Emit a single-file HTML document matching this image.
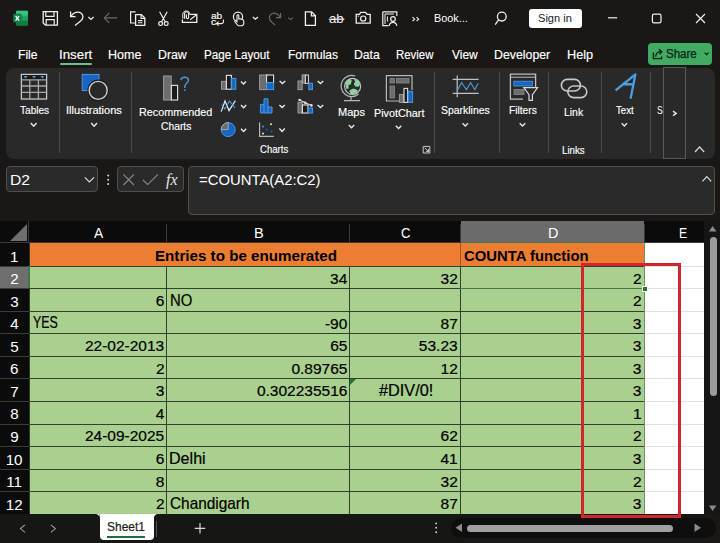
<!DOCTYPE html><html><head><meta charset="utf-8"><style>
html,body{margin:0;padding:0;width:720px;height:543px;overflow:hidden;background:#1a1715}
.t{position:absolute;white-space:pre;line-height:1;font-family:"Liberation Sans",sans-serif;transform-origin:0 0}
svg{overflow:visible}
</style></head><body>
<div style="position:absolute;left:0px;top:0px;width:720px;height:543px;background:#1a1715;"></div>
<div style="position:absolute;left:6px;top:67.5px;width:709px;height:91px;background:#292929;border-radius:8px;"></div>
<div style="position:absolute;left:6px;top:166px;width:92px;height:26px;background:#2a2a2a;border:1px solid #4f4f4f;border-radius:4px;box-sizing:border-box;"></div>
<div style="position:absolute;left:117px;top:166px;width:67px;height:26px;background:#2a2a2a;border:1px solid #4f4f4f;border-radius:4px;box-sizing:border-box;"></div>
<div style="position:absolute;left:188px;top:166px;width:527px;height:49px;background:#2a2a2a;border:1px solid #4f4f4f;border-radius:4px;box-sizing:border-box;"></div>
<div style="position:absolute;left:0px;top:221px;width:704px;height:22px;background:#0b0b0b;"></div>
<div style="position:absolute;left:704px;top:221px;width:16px;height:293px;background:#161616;"></div>
<svg style="position:absolute;left:0px;top:221px;" width="29" height="22" viewBox="0 0 29 22"><path d="M27 3 L27 20 L10 20 Z" fill="#6e6e6e"/></svg>
<div style="position:absolute;left:28px;top:221px;width:1px;height:22px;background:#3a3a3a;"></div>
<div style="position:absolute;left:166px;top:224px;width:1px;height:19px;background:#3a3a3a;"></div>
<div style="position:absolute;left:349px;top:224px;width:1px;height:19px;background:#3a3a3a;"></div>
<div style="position:absolute;left:460px;top:224px;width:1px;height:19px;background:#3a3a3a;"></div>
<div style="position:absolute;left:644px;top:224px;width:1px;height:19px;background:#3a3a3a;"></div>
<div style="position:absolute;left:461px;top:221px;width:183px;height:22px;background:#6b6b6b;"></div>
<div style="position:absolute;left:0px;top:242px;width:704px;height:1px;background:#3a3a3a;"></div>
<div style="position:absolute;left:0px;top:243px;width:29px;height:271px;background:#0b0b0b;"></div>
<div style="position:absolute;left:0px;top:266px;width:29px;height:22px;background:#6e6e6e;"></div>
<div style="position:absolute;left:0px;top:266px;width:29px;height:1px;background:#3a3a3a;"></div>
<div style="position:absolute;left:0px;top:288px;width:29px;height:1px;background:#3a3a3a;"></div>
<div style="position:absolute;left:0px;top:311px;width:29px;height:1px;background:#3a3a3a;"></div>
<div style="position:absolute;left:0px;top:333px;width:29px;height:1px;background:#3a3a3a;"></div>
<div style="position:absolute;left:0px;top:356px;width:29px;height:1px;background:#3a3a3a;"></div>
<div style="position:absolute;left:0px;top:378px;width:29px;height:1px;background:#3a3a3a;"></div>
<div style="position:absolute;left:0px;top:401px;width:29px;height:1px;background:#3a3a3a;"></div>
<div style="position:absolute;left:0px;top:424px;width:29px;height:1px;background:#3a3a3a;"></div>
<div style="position:absolute;left:0px;top:446px;width:29px;height:1px;background:#3a3a3a;"></div>
<div style="position:absolute;left:0px;top:469px;width:29px;height:1px;background:#3a3a3a;"></div>
<div style="position:absolute;left:0px;top:491px;width:29px;height:1px;background:#3a3a3a;"></div>
<div style="position:absolute;left:29px;top:243px;width:432px;height:23px;background:#ed7d31;"></div>
<div style="position:absolute;left:461px;top:243px;width:183px;height:23px;background:#ed7d31;"></div>
<div style="position:absolute;left:29px;top:266px;width:615px;height:248px;background:#a9d08e;"></div>
<div style="position:absolute;left:644px;top:243px;width:60px;height:271px;background:#ffffff;"></div>
<div style="position:absolute;left:644px;top:266px;width:60px;height:1px;background:#e1e1e1;"></div>
<div style="position:absolute;left:644px;top:288px;width:60px;height:1px;background:#e1e1e1;"></div>
<div style="position:absolute;left:644px;top:311px;width:60px;height:1px;background:#e1e1e1;"></div>
<div style="position:absolute;left:644px;top:333px;width:60px;height:1px;background:#e1e1e1;"></div>
<div style="position:absolute;left:644px;top:356px;width:60px;height:1px;background:#e1e1e1;"></div>
<div style="position:absolute;left:644px;top:378px;width:60px;height:1px;background:#e1e1e1;"></div>
<div style="position:absolute;left:644px;top:401px;width:60px;height:1px;background:#e1e1e1;"></div>
<div style="position:absolute;left:644px;top:424px;width:60px;height:1px;background:#e1e1e1;"></div>
<div style="position:absolute;left:644px;top:446px;width:60px;height:1px;background:#e1e1e1;"></div>
<div style="position:absolute;left:644px;top:469px;width:60px;height:1px;background:#e1e1e1;"></div>
<div style="position:absolute;left:644px;top:491px;width:60px;height:1px;background:#e1e1e1;"></div>
<div style="position:absolute;left:29px;top:266px;width:615px;height:1px;background:#34402e;"></div>
<div style="position:absolute;left:29px;top:288px;width:615px;height:1px;background:#34402e;"></div>
<div style="position:absolute;left:29px;top:311px;width:615px;height:1px;background:#34402e;"></div>
<div style="position:absolute;left:29px;top:333px;width:615px;height:1px;background:#34402e;"></div>
<div style="position:absolute;left:29px;top:356px;width:615px;height:1px;background:#34402e;"></div>
<div style="position:absolute;left:29px;top:378px;width:615px;height:1px;background:#34402e;"></div>
<div style="position:absolute;left:29px;top:401px;width:615px;height:1px;background:#34402e;"></div>
<div style="position:absolute;left:29px;top:424px;width:615px;height:1px;background:#34402e;"></div>
<div style="position:absolute;left:29px;top:446px;width:615px;height:1px;background:#34402e;"></div>
<div style="position:absolute;left:29px;top:469px;width:615px;height:1px;background:#34402e;"></div>
<div style="position:absolute;left:29px;top:491px;width:615px;height:1px;background:#34402e;"></div>
<div style="position:absolute;left:166px;top:266px;width:1px;height:248px;background:#34402e;"></div>
<div style="position:absolute;left:349px;top:266px;width:1px;height:248px;background:#34402e;"></div>
<div style="position:absolute;left:460px;top:266px;width:1px;height:248px;background:#34402e;"></div>
<div style="position:absolute;left:460px;top:243px;width:1px;height:23px;background:#9a5a2a;"></div>
<div style="position:absolute;left:29px;top:243px;width:1px;height:271px;background:#2a3a25;"></div>
<div style="position:absolute;left:644px;top:243px;width:1px;height:271px;background:#7a8a70;"></div>
<div style="position:absolute;left:460px;top:288px;width:185px;height:1px;background:#3f7a4a;"></div>
<div style="position:absolute;left:642px;top:286px;width:4px;height:4px;background:#2f6b3f;border:1px solid #fff;box-sizing:content-box;"></div>
<div style="position:absolute;left:461px;top:241.5px;width:183px;height:1.5px;background:#3e7a4c;"></div>
<div style="position:absolute;left:28px;top:266px;width:1.5px;height:22px;background:#3e7a4c;"></div>
<svg style="position:absolute;left:350px;top:379px;" width="7" height="7" viewBox="0 0 7 7"><path d="M0 0 L6 0 L0 6 Z" fill="#1f7a2f"/></svg>
<div class="t" style="left:154.61px;top:248.62px;font-size:14.80px;color:#000000;font-weight:bold;transform:scaleX(1.0246);">Entries to be enumerated</div>
<div class="t" style="left:464.11px;top:248.62px;font-size:14.80px;color:#000000;font-weight:bold;transform:scaleX(1.0039);">COUNTA function</div>
<div class="t" style="left:330.06px;top:270.57px;font-size:15.50px;color:#000000;font-weight:normal;transform:scaleX(1.0000);-webkit-text-stroke:0.2px #000;">34</div>
<div class="t" style="left:440.57px;top:270.57px;font-size:15.50px;color:#000000;font-weight:normal;transform:scaleX(1.0000);-webkit-text-stroke:0.2px #000;">32</div>
<div class="t" style="left:632.97px;top:270.57px;font-size:15.50px;color:#000000;font-weight:normal;transform:scaleX(1.0000);-webkit-text-stroke:0.2px #000;">2</div>
<div class="t" style="left:155.82px;top:293.12px;font-size:15.50px;color:#000000;font-weight:normal;transform:scaleX(1.0000);-webkit-text-stroke:0.2px #000;">6</div>
<div class="t" style="left:632.97px;top:293.12px;font-size:15.50px;color:#000000;font-weight:normal;transform:scaleX(1.0000);-webkit-text-stroke:0.2px #000;">2</div>
<div class="t" style="left:324.94px;top:315.68px;font-size:15.50px;color:#000000;font-weight:normal;transform:scaleX(1.0000);-webkit-text-stroke:0.2px #000;">-90</div>
<div class="t" style="left:440.57px;top:315.68px;font-size:15.50px;color:#000000;font-weight:normal;transform:scaleX(1.0000);-webkit-text-stroke:0.2px #000;">87</div>
<div class="t" style="left:632.82px;top:315.68px;font-size:15.50px;color:#000000;font-weight:normal;transform:scaleX(1.0000);-webkit-text-stroke:0.2px #000;">3</div>
<div class="t" style="left:330.22px;top:338.22px;font-size:15.50px;color:#000000;font-weight:normal;transform:scaleX(1.0000);-webkit-text-stroke:0.2px #000;">65</div>
<div class="t" style="left:418.87px;top:338.22px;font-size:15.50px;color:#000000;font-weight:normal;transform:scaleX(1.0000);-webkit-text-stroke:0.2px #000;">53.23</div>
<div class="t" style="left:632.82px;top:338.22px;font-size:15.50px;color:#000000;font-weight:normal;transform:scaleX(1.0000);-webkit-text-stroke:0.2px #000;">3</div>
<div class="t" style="left:155.97px;top:360.77px;font-size:15.50px;color:#000000;font-weight:normal;transform:scaleX(1.0000);-webkit-text-stroke:0.2px #000;">2</div>
<div class="t" style="left:291.39px;top:360.77px;font-size:15.50px;color:#000000;font-weight:normal;transform:scaleX(1.0000);-webkit-text-stroke:0.2px #000;">0.89765</div>
<div class="t" style="left:440.57px;top:360.77px;font-size:15.50px;color:#000000;font-weight:normal;transform:scaleX(1.0000);-webkit-text-stroke:0.2px #000;">12</div>
<div class="t" style="left:632.82px;top:360.77px;font-size:15.50px;color:#000000;font-weight:normal;transform:scaleX(1.0000);-webkit-text-stroke:0.2px #000;">3</div>
<div class="t" style="left:155.82px;top:383.32px;font-size:15.50px;color:#000000;font-weight:normal;transform:scaleX(1.0000);-webkit-text-stroke:0.2px #000;">3</div>
<div class="t" style="left:256.90px;top:383.32px;font-size:15.50px;color:#000000;font-weight:normal;transform:scaleX(1.0000);-webkit-text-stroke:0.2px #000;">0.302235516</div>
<div class="t" style="left:632.82px;top:383.32px;font-size:15.50px;color:#000000;font-weight:normal;transform:scaleX(1.0000);-webkit-text-stroke:0.2px #000;">3</div>
<div class="t" style="left:155.66px;top:405.87px;font-size:15.50px;color:#000000;font-weight:normal;transform:scaleX(1.0000);-webkit-text-stroke:0.2px #000;">4</div>
<div class="t" style="left:632.89px;top:405.87px;font-size:15.50px;color:#000000;font-weight:normal;transform:scaleX(1.0000);-webkit-text-stroke:0.2px #000;">1</div>
<div class="t" style="left:440.57px;top:428.43px;font-size:15.50px;color:#000000;font-weight:normal;transform:scaleX(1.0000);-webkit-text-stroke:0.2px #000;">62</div>
<div class="t" style="left:632.97px;top:428.43px;font-size:15.50px;color:#000000;font-weight:normal;transform:scaleX(1.0000);-webkit-text-stroke:0.2px #000;">2</div>
<div class="t" style="left:155.82px;top:450.97px;font-size:15.50px;color:#000000;font-weight:normal;transform:scaleX(1.0000);-webkit-text-stroke:0.2px #000;">6</div>
<div class="t" style="left:440.49px;top:450.97px;font-size:15.50px;color:#000000;font-weight:normal;transform:scaleX(1.0000);-webkit-text-stroke:0.2px #000;">41</div>
<div class="t" style="left:632.82px;top:450.97px;font-size:15.50px;color:#000000;font-weight:normal;transform:scaleX(1.0000);-webkit-text-stroke:0.2px #000;">3</div>
<div class="t" style="left:155.82px;top:473.52px;font-size:15.50px;color:#000000;font-weight:normal;transform:scaleX(1.0000);-webkit-text-stroke:0.2px #000;">8</div>
<div class="t" style="left:440.57px;top:473.52px;font-size:15.50px;color:#000000;font-weight:normal;transform:scaleX(1.0000);-webkit-text-stroke:0.2px #000;">32</div>
<div class="t" style="left:632.97px;top:473.52px;font-size:15.50px;color:#000000;font-weight:normal;transform:scaleX(1.0000);-webkit-text-stroke:0.2px #000;">2</div>
<div class="t" style="left:155.97px;top:496.07px;font-size:15.50px;color:#000000;font-weight:normal;transform:scaleX(1.0000);-webkit-text-stroke:0.2px #000;">2</div>
<div class="t" style="left:440.57px;top:496.07px;font-size:15.50px;color:#000000;font-weight:normal;transform:scaleX(1.0000);-webkit-text-stroke:0.2px #000;">87</div>
<div class="t" style="left:632.82px;top:496.07px;font-size:15.50px;color:#000000;font-weight:normal;transform:scaleX(1.0000);-webkit-text-stroke:0.2px #000;">3</div>
<div class="t" style="left:84.83px;top:338.22px;font-size:15.50px;color:#000000;font-weight:normal;transform:scaleX(0.9976);-webkit-text-stroke:0.2px #000;">22-02-2013</div>
<div class="t" style="left:84.83px;top:428.43px;font-size:15.50px;color:#000000;font-weight:normal;transform:scaleX(0.9976);-webkit-text-stroke:0.2px #000;">24-09-2025</div>
<div class="t" style="left:169.61px;top:292.79px;font-size:15.90px;color:#000000;font-weight:normal;transform:scaleX(0.9365);-webkit-text-stroke:0.2px #000;">NO</div>
<div class="t" style="left:32.59px;top:315.34px;font-size:15.90px;color:#000000;font-weight:normal;transform:scaleX(0.7788);-webkit-text-stroke:0.2px #000;">YES</div>
<div class="t" style="left:378.92px;top:382.99px;font-size:15.90px;color:#000000;font-weight:normal;transform:scaleX(1.0246);-webkit-text-stroke:0.2px #000;">#DIV/0!</div>
<div class="t" style="left:169.11px;top:450.63px;font-size:15.90px;color:#000000;font-weight:normal;transform:scaleX(1.0128);-webkit-text-stroke:0.2px #000;">Delhi</div>
<div class="t" style="left:169.63px;top:495.74px;font-size:15.90px;color:#000000;font-weight:normal;transform:scaleX(0.9680);-webkit-text-stroke:0.2px #000;">Chandigarh</div>
<div class="t" style="left:9.95px;top:248.58px;font-size:15.20px;color:#ffffff;font-weight:normal;transform:scaleX(1.0000);">1</div>
<div class="t" style="left:10.18px;top:271.13px;font-size:15.20px;color:#ffffff;font-weight:normal;transform:scaleX(1.0000);">2</div>
<div class="t" style="left:10.18px;top:293.68px;font-size:15.20px;color:#ffffff;font-weight:normal;transform:scaleX(1.0000);">3</div>
<div class="t" style="left:10.26px;top:316.23px;font-size:15.20px;color:#ffffff;font-weight:normal;transform:scaleX(1.0000);">4</div>
<div class="t" style="left:10.18px;top:338.78px;font-size:15.20px;color:#ffffff;font-weight:normal;transform:scaleX(1.0000);">5</div>
<div class="t" style="left:10.11px;top:361.33px;font-size:15.20px;color:#ffffff;font-weight:normal;transform:scaleX(1.0000);">6</div>
<div class="t" style="left:10.18px;top:383.88px;font-size:15.20px;color:#ffffff;font-weight:normal;transform:scaleX(1.0000);">7</div>
<div class="t" style="left:10.14px;top:406.43px;font-size:15.20px;color:#ffffff;font-weight:normal;transform:scaleX(1.0000);">8</div>
<div class="t" style="left:10.18px;top:428.98px;font-size:15.20px;color:#ffffff;font-weight:normal;transform:scaleX(1.0000);">9</div>
<div class="t" style="left:5.66px;top:451.53px;font-size:15.20px;color:#ffffff;font-weight:normal;transform:scaleX(1.0000);">10</div>
<div class="t" style="left:6.31px;top:474.08px;font-size:15.20px;color:#ffffff;font-weight:normal;transform:scaleX(1.0000);">11</div>
<div class="t" style="left:5.77px;top:496.63px;font-size:15.20px;color:#ffffff;font-weight:normal;transform:scaleX(1.0000);">12</div>
<div class="t" style="left:93.90px;top:224.91px;font-size:15.40px;color:#ffffff;font-weight:normal;transform:scaleX(0.8935);">A</div>
<div class="t" style="left:253.83px;top:224.91px;font-size:15.40px;color:#ffffff;font-weight:normal;transform:scaleX(0.9467);">B</div>
<div class="t" style="left:401.05px;top:224.91px;font-size:15.40px;color:#ffffff;font-weight:normal;transform:scaleX(0.8488);">C</div>
<div class="t" style="left:547.54px;top:224.91px;font-size:15.40px;color:#ffffff;font-weight:normal;transform:scaleX(0.9386);">D</div>
<div class="t" style="left:679.43px;top:224.91px;font-size:15.40px;color:#ffffff;font-weight:normal;transform:scaleX(0.7864);">E</div>
<div class="t" style="left:198.66px;top:173.08px;font-size:14.50px;color:#ffffff;font-weight:normal;transform:scaleX(1.0244);">=COUNTA(A2:C2)</div>
<div class="t" style="left:9.74px;top:172.72px;font-size:14.80px;color:#ffffff;font-weight:normal;transform:scaleX(1.0622);">D2</div>
<div class="t" style="left:17.53px;top:48.80px;font-size:12.00px;color:#ffffff;font-weight:normal;transform:scaleX(1.0101);-webkit-text-stroke:0.15px #fff;">File</div>
<div class="t" style="left:58.80px;top:48.80px;font-size:12.00px;color:#ffffff;font-weight:normal;transform:scaleX(1.1088);-webkit-text-stroke:0.15px #fff;">Insert</div>
<div class="t" style="left:108.40px;top:48.80px;font-size:12.00px;color:#ffffff;font-weight:normal;transform:scaleX(1.0433);-webkit-text-stroke:0.15px #fff;">Home</div>
<div class="t" style="left:158.21px;top:48.80px;font-size:12.00px;color:#ffffff;font-weight:normal;transform:scaleX(1.0273);-webkit-text-stroke:0.15px #fff;">Draw</div>
<div class="t" style="left:204.07px;top:48.80px;font-size:12.00px;color:#ffffff;font-weight:normal;transform:scaleX(0.9720);-webkit-text-stroke:0.15px #fff;">Page Layout</div>
<div class="t" style="left:287.64px;top:48.80px;font-size:12.00px;color:#ffffff;font-weight:normal;transform:scaleX(1.0008);-webkit-text-stroke:0.15px #fff;">Formulas</div>
<div class="t" style="left:354.02px;top:48.80px;font-size:12.00px;color:#ffffff;font-weight:normal;transform:scaleX(1.0181);-webkit-text-stroke:0.15px #fff;">Data</div>
<div class="t" style="left:396.39px;top:48.80px;font-size:12.00px;color:#ffffff;font-weight:normal;transform:scaleX(0.9505);-webkit-text-stroke:0.15px #fff;">Review</div>
<div class="t" style="left:451.64px;top:48.80px;font-size:12.00px;color:#ffffff;font-weight:normal;transform:scaleX(0.9984);-webkit-text-stroke:0.15px #fff;">View</div>
<div class="t" style="left:494.41px;top:48.80px;font-size:12.00px;color:#ffffff;font-weight:normal;transform:scaleX(1.0277);-webkit-text-stroke:0.15px #fff;">Developer</div>
<div class="t" style="left:567.38px;top:48.80px;font-size:12.00px;color:#ffffff;font-weight:normal;transform:scaleX(1.0594);-webkit-text-stroke:0.15px #fff;">Help</div>
<div style="position:absolute;left:60px;top:63px;width:32px;height:2px;background:#6fc08f;border-radius:1px;"></div>
<div style="position:absolute;left:648px;top:43px;width:63.5px;height:22px;background:#41ab64;border-radius:4px;"></div>
<div class="t" style="left:666.48px;top:48.30px;font-size:12.00px;color:#0a1f10;font-weight:normal;transform:scaleX(0.9612);-webkit-text-stroke:0.25px #0a1f10;">Share</div>
<svg style="position:absolute;left:0;top:0" width="720" height="543"><path d="M653.4 52.4 V58.6 H661.6 V56.4" fill="none" stroke="#0a1f10" stroke-width="1.3"/><path d="M655.6 56.6 C656 53.2 658 51.6 661 51.6" fill="none" stroke="#0a1f10" stroke-width="1.3"/><path d="M658.8 49.2 L661.8 51.6 L659.4 54.4" fill="none" stroke="#0a1f10" stroke-width="1.3"/><path d="M704.6 52.6 L706.6 54.6 L708.6 52.6" fill="none" stroke="#0a1f10" stroke-width="1.2"/></svg>
<div class="t" style="left:19.50px;top:104.98px;font-size:11.20px;color:#ffffff;font-weight:normal;transform:scaleX(0.9007);-webkit-text-stroke:0.15px #fff;">Tables</div>
<div class="t" style="left:65.70px;top:104.98px;font-size:11.20px;color:#ffffff;font-weight:normal;transform:scaleX(0.9878);-webkit-text-stroke:0.15px #fff;">Illustrations</div>
<div class="t" style="left:139.44px;top:106.78px;font-size:11.20px;color:#ffffff;font-weight:normal;transform:scaleX(0.9649);-webkit-text-stroke:0.15px #fff;">Recommended</div>
<div class="t" style="left:160.78px;top:121.28px;font-size:11.20px;color:#ffffff;font-weight:normal;transform:scaleX(0.9210);-webkit-text-stroke:0.15px #fff;">Charts</div>
<div class="t" style="left:337.81px;top:107.18px;font-size:11.20px;color:#ffffff;font-weight:normal;transform:scaleX(0.9887);-webkit-text-stroke:0.15px #fff;">Maps</div>
<div class="t" style="left:373.84px;top:107.98px;font-size:11.20px;color:#ffffff;font-weight:normal;transform:scaleX(0.9650);-webkit-text-stroke:0.15px #fff;">PivotChart</div>
<div class="t" style="left:441.23px;top:105.18px;font-size:11.20px;color:#ffffff;font-weight:normal;transform:scaleX(0.9337);-webkit-text-stroke:0.15px #fff;">Sparklines</div>
<div class="t" style="left:508.88px;top:105.18px;font-size:11.20px;color:#ffffff;font-weight:normal;transform:scaleX(0.9117);-webkit-text-stroke:0.15px #fff;">Filters</div>
<div class="t" style="left:563.87px;top:107.18px;font-size:11.20px;color:#ffffff;font-weight:normal;transform:scaleX(0.9310);-webkit-text-stroke:0.15px #fff;">Link</div>
<div class="t" style="left:616.11px;top:105.18px;font-size:11.20px;color:#ffffff;font-weight:normal;transform:scaleX(0.8607);-webkit-text-stroke:0.15px #fff;">Text</div>
<div class="t" style="left:259.82px;top:144.08px;font-size:11.20px;color:#ffffff;font-weight:normal;transform:scaleX(0.8554);-webkit-text-stroke:0.15px #fff;">Charts</div>
<div class="t" style="left:561.92px;top:144.78px;font-size:11.20px;color:#ffffff;font-weight:normal;transform:scaleX(0.8687);-webkit-text-stroke:0.15px #fff;">Links</div>
<div style="position:absolute;left:58.5px;top:72px;width:1px;height:81px;background:#4a4a4a;"></div>
<div style="position:absolute;left:130.5px;top:72px;width:1px;height:81px;background:#4a4a4a;"></div>
<div style="position:absolute;left:433.5px;top:72px;width:1px;height:81px;background:#4a4a4a;"></div>
<div style="position:absolute;left:498.5px;top:72px;width:1px;height:81px;background:#4a4a4a;"></div>
<div style="position:absolute;left:547.5px;top:72px;width:1px;height:81px;background:#4a4a4a;"></div>
<div style="position:absolute;left:600.5px;top:72px;width:1px;height:81px;background:#4a4a4a;"></div>
<div style="position:absolute;left:649.5px;top:72px;width:1px;height:81px;background:#4a4a4a;"></div>
<div style="position:absolute;left:663px;top:67px;width:22.5px;height:92px;background:transparent;border:1px solid #5a5a5a;box-sizing:border-box;"></div>
<div style="position:absolute;left:0px;top:514px;width:704px;height:29px;background:#161613;"></div>
<div style="position:absolute;left:99.5px;top:514px;width:54.5px;height:25.5px;background:#ffffff;border-radius:0 0 4px 4px;"></div>
<svg style="position:absolute;left:0;top:0" width="720" height="543"><path d="M95.5 514 H99.6 V518.2 A4.1 4.1 0 0 0 95.5 514 Z M153.9 514 H158 A4.1 4.1 0 0 0 153.9 518.2 Z" fill="#ffffff"/></svg>
<div class="t" style="left:107.26px;top:520.28px;font-size:13.20px;color:#1a1a1a;font-weight:normal;transform:scaleX(0.9076);-webkit-text-stroke:0.2px #1a1a1a;">Sheet1</div>
<div style="position:absolute;left:107px;top:536px;width:38px;height:2px;background:#1e6b3f;"></div>
<div style="position:absolute;left:156px;top:521px;width:1px;height:16px;background:#555;"></div>
<div class="t" style="left:433.53px;top:13.33px;font-size:11.50px;color:#ffffff;font-weight:normal;transform:scaleX(0.9435);">Book...</div>
<div class="t" style="left:210.60px;top:11.21px;font-size:9.40px;color:#f0f0f0;font-weight:normal;transform:scaleX(1.0742);-webkit-text-stroke:0.2px #f0f0f0;">ab</div>
<div class="t" style="left:210.78px;top:17.21px;font-size:9.40px;color:#f0f0f0;font-weight:normal;transform:scaleX(1.1250);-webkit-text-stroke:0.2px #f0f0f0;">c</div>
<div class="t" style="left:329.47px;top:12.89px;font-size:12.60px;color:#f0f0f0;font-weight:normal;transform:scaleX(1.0479);">ab</div>
<div style="position:absolute;left:529px;top:9px;width:53px;height:19px;background:#ffffff;border-radius:3px;"></div>
<div class="t" style="left:538.30px;top:13.07px;font-size:11.80px;color:#1b1b1b;font-weight:normal;transform:scaleX(0.9381);">Sign in</div>
<svg style="position:absolute;left:0;top:0" width="720" height="543"><rect x="16" y="10.8" width="12" height="14.6" rx="1.2" fill="#21a366"/>
<rect x="16" y="10.8" width="12" height="4.8" rx="1" fill="#33c481"/>
<rect x="16" y="20.6" width="12" height="4.8" rx="1" fill="#107c41"/>
<rect x="13.2" y="13.8" width="8.4" height="8.7" rx="1" fill="#107c41"/>
<path d="M15.6 15.8 L19.2 20.6 M19.2 15.8 L15.6 20.6" stroke="#fff" stroke-width="1.3"/>
<path d="M43.2 11.6 H57.4 V25.2 H45.4 L43.2 23 Z" fill="none" stroke="#f0f0f0" stroke-width="1.3"/>
<path d="M45.8 11.6 V16.4 H54 V11.6" fill="none" stroke="#f0f0f0" stroke-width="1.2"/>
<path d="M46.2 25.2 V19.6 H54.2 V25.2" fill="none" stroke="#f0f0f0" stroke-width="1.2"/>
<path d="M70.6 11.6 V16.6 H75.6" fill="none" stroke="#f0f0f0" stroke-width="1.3"/>
<path d="M71 16.3 C73.5 12.3 78 11 81 13 C83.6 15 83.4 18.6 81.2 20.6 L75 25.5" fill="none" stroke="#f0f0f0" stroke-width="1.3"/>
<path d="M88.4 17 L91 19.4 L93.6 17" fill="none" stroke="#f0f0f0" stroke-width="1.2"/>
<path d="M117.3 17.9 H104.3 M109.2 13 L104.3 17.9 L109.2 22.8" fill="none" stroke="#6a6a6a" stroke-width="1.1"/>
<path d="M135.6 11.8 H130.6 V23 H135" fill="none" stroke="#f0f0f0" stroke-width="1.2"/>
<path d="M135.6 14.6 H141.4 L144.8 18 V25.4 H135.6 Z" fill="none" stroke="#f0f0f0" stroke-width="1.3"/>
<path d="M141 14.6 V18.4 H144.8 M138 20.6 H142.4 M138 22.8 H142.4" fill="none" stroke="#f0f0f0" stroke-width="1.1"/>
<path d="M159.6 11.8 L165.2 21.8 M167.2 11.8 L161.6 21.8" fill="none" stroke="#f0f0f0" stroke-width="1.2"/>
<circle cx="160.6" cy="23.6" r="1.9" fill="none" stroke="#f0f0f0" stroke-width="1.2"/>
<circle cx="166.2" cy="23.6" r="1.9" fill="none" stroke="#f0f0f0" stroke-width="1.2"/>
<path d="M189.6 14.4 H196.8 V22.4 H182.4 V19.4" fill="none" stroke="#f0f0f0" stroke-width="1.3"/>
<path d="M190.2 19.8 L196.4 14.8" fill="none" stroke="#f0f0f0" stroke-width="1.1"/>
<path d="M184.6 18.8 V13.6 C184.6 11.2 188.6 11.2 188.6 13.6 V17.6 C188.6 19 186.4 19 186.4 17.6 V14.4" fill="none" stroke="#f0f0f0" stroke-width="1.1"/>
<path d="M182.8 18.6 V14.2 C182.8 10 189.6 10 189.6 13.8" fill="none" stroke="#f0f0f0" stroke-width="1"/>
<path d="M223.4 19.4 V21.8 C223.4 23.2 222.4 23.6 221 23.6 H216.6 M218.6 21.6 L216.4 23.6 L218.6 25.6" fill="none" stroke="#f0f0f0" stroke-width="1.1"/>
<circle cx="238" cy="16.8" r="4.6" fill="none" stroke="#f0f0f0" stroke-width="1.2"/>
<path d="M237.4 24.8 L235 22 C234.4 21 235.6 20.2 236.4 21 L237 21.6 V15.6 C237 14.4 238.8 14.4 238.8 15.6 V19 C240.8 18.6 243.8 19.4 243.8 21.4 V23 C243.8 24.6 242.6 25.8 241 25.8 H238.4 Z" fill="#1a1715" stroke="#f0f0f0" stroke-width="1.1"/>
<path d="M252.8 17 L255.4 19.2 L258 17" fill="none" stroke="#f0f0f0" stroke-width="1.2"/>
<path d="M280.6 13 V17.6 H276" fill="none" stroke="#6a6a6a" stroke-width="1.2"/>
<path d="M280.2 17.2 C278 13 273 12 270.6 14.6 C268.4 17 269.6 20 272 22.4 L275 25" fill="none" stroke="#6a6a6a" stroke-width="1.2"/>
<path d="M288.2 17.6 L290.6 19.6 L293 17.6" fill="none" stroke="#6a6a6a" stroke-width="1.1"/>
<path d="M305.4 11.8 H311.6 L315.4 15.6 V25.4 H305.4 Z M311.4 11.8 V15.8 H315.4" fill="none" stroke="#f0f0f0" stroke-width="1.3"/>
<path d="M328.8 19.2 H344.4" stroke="#f0f0f0" stroke-width="1.2"/>
<path d="M356.2 14.4 H359.4 L360.8 12.4 H365.6 L367 14.4 H370.2 V23.2 H356.2 Z" fill="none" stroke="#f0f0f0" stroke-width="1.3"/>
<circle cx="363.2" cy="18.6" r="2.6" fill="none" stroke="#f0f0f0" stroke-width="1.2"/>
<circle cx="358.4" cy="16.2" r="0.6" fill="#f0f0f0"/>
<path d="M382.8 11.8 H396.8 V16 M382.8 11.8 V25.6 H388.6" fill="none" stroke="#f0f0f0" stroke-width="1.2"/>
<path d="M385 14 H394 M385 14 V24 M387.4 16.4 V21.6" fill="none" stroke="#f0f0f0" stroke-width="1"/>
<circle cx="393" cy="19" r="2.3" fill="none" stroke="#f0f0f0" stroke-width="1.2"/>
<path d="M389.2 25.8 C389.6 23 391 22.4 393 22.4 C395 22.4 396.4 23 396.8 25.8" fill="none" stroke="#f0f0f0" stroke-width="1.2"/>
<path d="M412.6 17.2 L414.6 19.2 L412.6 21.2 M416.6 17.2 L418.6 19.2 L416.6 21.2" fill="none" stroke="#f0f0f0" stroke-width="1.2"/>
<circle cx="501.8" cy="16.6" r="4.4" fill="none" stroke="#f0f0f0" stroke-width="1.3"/>
<path d="M498.6 19.8 L495.2 24.6" stroke="#f0f0f0" stroke-width="1.3"/>
<path d="M608 17.8 H617.2" stroke="#f0f0f0" stroke-width="1.2"/>
<rect x="652.4" y="14.2" width="8.6" height="8.6" rx="1.6" fill="none" stroke="#f0f0f0" stroke-width="1.2"/>
<path d="M696 14 L705 23 M705 14 L696 23" stroke="#f0f0f0" stroke-width="1.2"/><rect x="21.4" y="74.4" width="25.2" height="24.6" fill="none" stroke="#c8c8c8" stroke-width="1.3"/>
<rect x="22" y="75" width="24" height="4.4" fill="#1a1a1a"/>
<path d="M23.6 76 L27.6 76 L25.6 78.4 Z" fill="#4a9be0"/>
<path d="M32 76 L36 76 L34 78.4 Z" fill="#4a9be0"/>
<path d="M40.4 76 L44.4 76 L42.4 78.4 Z" fill="#4a9be0"/>
<path d="M21.4 79.8 H46.6 M21.4 86 H46.6 M21.4 92.4 H46.6 M29.8 79.8 V99 M38.4 79.8 V99" fill="none" stroke="#a8a8a8" stroke-width="1.3"/>
<rect x="82.2" y="74.4" width="16.8" height="16.2" fill="#1765c4" stroke="#4a9be0" stroke-width="1"/>
<circle cx="98.2" cy="90.4" r="10" fill="#292929" stroke="#1c1c1c" stroke-width="1.6"/>
<circle cx="98.2" cy="90.4" r="9" fill="#292929" stroke="#d0d0d0" stroke-width="1.4"/>
<rect x="163.6" y="76" width="7.6" height="24" fill="#6c6c6c" stroke="#9a9a9a" stroke-width="1"/>
<rect x="171.4" y="85.4" width="6.2" height="14.6" fill="#1c1c1c" stroke="#d8d8d8" stroke-width="1.2"/>
<path d="M181 80 C181 76.4 188.4 76.2 188.4 80.2 C188.4 83.2 184.8 83.4 184.8 86.6 V88" fill="none" stroke="#4d94cf" stroke-width="1.5"/>
<circle cx="184.8" cy="90.2" r="0.9" fill="#4d94cf"/>
<rect x="221.5" y="81.4" width="4.6" height="7.8" fill="#6c6c6c" stroke="#9a9a9a" stroke-width="1"/>
<rect x="226.4" y="75.4" width="5" height="13.8" fill="#1c1c1c" stroke="#e0e0e0" stroke-width="1.1"/>
<rect x="231.6" y="78.4" width="4.2" height="10.8" fill="#1765c4" stroke="#4a9be0" stroke-width="1"/>
<path d="M241 81.4 L243.5 84 L246 81.4" fill="none" stroke="#e8e8e8" stroke-width="1.4"/>
<path d="M221.2 111.6 L225 101 L229 110.6 L235.4 100.6" fill="none" stroke="#e8e8e8" stroke-width="1.2"/>
<path d="M221.6 104.6 L224.8 109 L229.6 101 L235 108" fill="none" stroke="#4a9be0" stroke-width="1.1"/>
<path d="M241 105 L243.6 107.7 L246.2 105" fill="none" stroke="#e8e8e8" stroke-width="1.4"/>
<circle cx="228.2" cy="129.6" r="7" fill="#1765c4" stroke="#4a9be0" stroke-width="1"/>
<path d="M228.2 129.6 H221.2 A7 7 0 0 1 228.2 122.6 Z" fill="#6c6c6c" stroke="#a8a8a8" stroke-width="1"/>
<path d="M241 128.8 L243.6 131.4 L246.2 128.8" fill="none" stroke="#e8e8e8" stroke-width="1.4"/>
<rect x="259.6" y="75" width="7" height="14.6" fill="#6c6c6c" stroke="#9a9a9a" stroke-width="1"/>
<rect x="266.6" y="75" width="7" height="7.6" fill="#1c1c1c" stroke="#e0e0e0" stroke-width="1.1"/>
<rect x="266.6" y="82.6" width="7" height="7" fill="#1765c4" stroke="#4a9be0" stroke-width="1"/>
<path d="M279.6 81 L282.4 83.6 L285.2 81" fill="none" stroke="#e8e8e8" stroke-width="1.4"/>
<path d="M260.4 113 V104.4 H264 V98.8 H268 V107 H272 V113 Z M264 113 V104.4 M268 113 V107" fill="#1765c4" stroke="#4a9be0" stroke-width="1"/>
<path d="M279.4 105 L282.1 107.6 L284.8 105" fill="none" stroke="#e8e8e8" stroke-width="1.4"/>
<path d="M259.6 122.6 V136.4 H273.8" fill="none" stroke="#b8b8b8" stroke-width="1.2"/>
<circle cx="271" cy="124.2" r="1" fill="#e8e8e8"/>
<circle cx="263" cy="133.6" r="1" fill="#e8e8e8"/>
<circle cx="263" cy="126.4" r="1" fill="#4a9be0"/>
<circle cx="266.6" cy="129.6" r="1" fill="#1765c4"/>
<circle cx="271.6" cy="131.6" r="1" fill="#1765c4"/>
<path d="M279.4 128.6 L282.1 131.4 L284.8 128.6" fill="none" stroke="#e8e8e8" stroke-width="1.4"/>
<rect x="298" y="81" width="4.2" height="8.6" fill="#6c6c6c" stroke="#9a9a9a" stroke-width="1"/>
<rect x="302.2" y="75" width="3.2" height="8" fill="#6c6c6c" stroke="#b0b0b0" stroke-width="1"/>
<rect x="305.4" y="75" width="3" height="8.4" fill="#1c1c1c" stroke="#e0e0e0" stroke-width="1"/>
<rect x="308.8" y="83.2" width="3.6" height="6.4" fill="#1765c4" stroke="#4a9be0" stroke-width="1"/>
<path d="M317.6 81 L320.4 83.6 L323.2 81" fill="none" stroke="#e8e8e8" stroke-width="1.4"/>
<rect x="298" y="102.4" width="4.2" height="10.6" fill="#6c6c6c" stroke="#9a9a9a" stroke-width="1"/>
<rect x="302.4" y="105" width="5.6" height="8" fill="#1c1c1c" stroke="#e0e0e0" stroke-width="1.1"/>
<rect x="308.2" y="108" width="4.4" height="5" fill="#1765c4" stroke="#4a9be0" stroke-width="1"/>
<path d="M299.6 100 L305.2 102.8 L311.4 105.4" fill="none" stroke="#e0e0e0" stroke-width="1.1"/>
<circle cx="299.6" cy="100" r="1.3" fill="#e0e0e0"/>
<circle cx="305.2" cy="102.8" r="1.3" fill="#e0e0e0"/>
<circle cx="311.4" cy="105.4" r="1.3" fill="#e0e0e0"/>
<path d="M317.6 105 L320.4 107.6 L323.2 105" fill="none" stroke="#e8e8e8" stroke-width="1.4"/>
<path d="M355.2 76 A10.6 10.6 0 1 0 358.6 94" fill="none" stroke="#b8b8b8" stroke-width="1.2"/>
<circle cx="352.6" cy="86.4" r="8" fill="#2b2b2b" stroke="#c8c8c8" stroke-width="1.1"/>
<path d="M345.4 85 C345.6 81.4 347.8 79.4 350.4 78.8 L351.8 81 L350.6 84.4 L348.4 85.2 L348.8 88.4 L346.4 89 Z M353.6 78.8 C356.6 79.4 359.2 81.6 360.2 84.6 L358.6 86.8 L355.2 86.4 L353.8 84 L355.2 81.6 Z M349.4 90.6 L353.2 88.6 L357.6 90 L357.4 92.6 C355.6 94.2 352.4 94.6 350.2 93.8 Z" fill="#8fd19e"/>
<path d="M351 96.4 V100 M344 100.6 H360" fill="none" stroke="#b8b8b8" stroke-width="1.2"/>
<path d="M399 101 H386.4 V75.6 H412 V90" fill="none" stroke="#b8b8b8" stroke-width="1.2"/>
<rect x="390" y="78.4" width="4.4" height="4.6" fill="#6c6c6c" stroke="#8a8a8a" stroke-width="0.8"/>
<rect x="396.4" y="78.4" width="12.6" height="4.6" fill="#6c6c6c" stroke="#8a8a8a" stroke-width="0.8"/>
<rect x="390" y="86" width="4.4" height="12" fill="#6c6c6c" stroke="#8a8a8a" stroke-width="0.8"/>
<rect x="399.4" y="94.4" width="4" height="8" fill="#6c6c6c" stroke="#9a9a9a" stroke-width="1"/>
<rect x="404" y="88.4" width="3.6" height="14" fill="#1c1c1c" stroke="#e0e0e0" stroke-width="1.1"/>
<rect x="408.2" y="91.4" width="4.4" height="11" fill="#1765c4" stroke="#4a9be0" stroke-width="1"/>
<path d="M452.6 79.4 H478.6 M452.6 93.3 H478.6 M457.2 75.6 V97.2" fill="none" stroke="#c0c0c0" stroke-width="1.2"/>
<path d="M457.8 89.6 L461.6 82.6 L466.4 89.6 L470.6 82.6 L474.8 89.6 L478.2 83.4" fill="none" stroke="#4a92c8" stroke-width="1.2"/>
<path d="M523 99.2 H510.4 V74.2 H535.6 V87" fill="none" stroke="#c0c0c0" stroke-width="1.3"/>
<path d="M510.4 77.2 H535.6" stroke="#c0c0c0" stroke-width="1"/>
<rect x="513.8" y="81.2" width="18.6" height="4.8" fill="#1765c4" stroke="#4a9be0" stroke-width="0.8"/>
<rect x="514" y="89.6" width="10" height="4.8" fill="#6c6c6c" stroke="#8a8a8a" stroke-width="0.8"/>
<path d="M523.8 87.6 H537.6 L532.4 94.6 V100.4 H529 V94.6 Z" fill="#292929" stroke="#d8d8d8" stroke-width="1.2"/>
<rect x="561.4" y="79.4" width="19" height="11.6" rx="5.8" fill="none" stroke="#c8c8c8" stroke-width="1.6"/>
<rect x="567.8" y="86" width="19" height="11.6" rx="5.8" fill="none" stroke="#c8c8c8" stroke-width="1.6"/>
<path d="M615.6 90.4 L635.4 74.4 L630.6 98.6 M622.6 84 L633.2 84.4" fill="none" stroke="#4da0e0" stroke-width="2.3" stroke-linejoin="round"/>
<path d="M673 111.2 L676.2 113.4 L673 115.6" fill="none" stroke="#e8e8e8" stroke-width="1.4"/>
<path d="M695 152 L699.6 147 L704.2 152" fill="none" stroke="#d8d8d8" stroke-width="1.2"/>
<path d="M423.2 153 V146.4 H429.8 M423.2 153 H429.8 V146.4 M424.8 147.8 L428.6 151.6 M428.6 149 V151.6 H426" fill="none" stroke="#c8c8c8" stroke-width="1"/>
<path d="M30.8 123 L33.7 126.3 L36.6 123" fill="none" stroke="#e8e8e8" stroke-width="1.4"/>
<path d="M91.2 123 L94.1 126.3 L97 123" fill="none" stroke="#e8e8e8" stroke-width="1.4"/>
<path d="M348.8 125 L351.5 127.8 L354.2 125" fill="none" stroke="#e8e8e8" stroke-width="1.4"/>
<path d="M395.8 125.8 L398.55 128.6 L401.3 125.8" fill="none" stroke="#e8e8e8" stroke-width="1.4"/>
<path d="M462.5 123.3 L465.25 126 L468 123.3" fill="none" stroke="#e8e8e8" stroke-width="1.4"/>
<path d="M519.7 123.3 L522.5 126 L525.3 123.3" fill="none" stroke="#e8e8e8" stroke-width="1.4"/>
<path d="M621.7 123.3 L624.35 126 L627 123.3" fill="none" stroke="#e8e8e8" stroke-width="1.4"/>
<path d="M123.4 174.4 L134 185 M134 174.4 L123.4 185" stroke="#8a8a8a" stroke-width="1.1"/>
<path d="M143 180 L147.6 184.6 L158 174.4" fill="none" stroke="#8a8a8a" stroke-width="1.1"/>
<path d="M84.8 177.4 L89.4 182 L94 177.4" fill="none" stroke="#d8d8d8" stroke-width="1.2"/>
<circle cx="108.2" cy="175.6" r="1" fill="#d8d8d8"/>
<circle cx="108.2" cy="179.8" r="1" fill="#d8d8d8"/>
<circle cx="108.2" cy="184" r="1" fill="#d8d8d8"/>
<path d="M702.4 181.4 L706.8 176.6 L711.2 181.4" fill="none" stroke="#d8d8d8" stroke-width="1.2"/></svg>
<div class="t" style="left:166px;top:171.6px;font-family:Liberation Serif;font-style:italic;font-size:16px;color:#e8e8e8">fx</div>
<div class="t" style="left:657.11px;top:105.18px;font-size:11.20px;color:#ffffff;font-weight:normal;transform:scaleX(0.7764);">S</div>
<div style="position:absolute;left:709.5px;top:236.5px;width:7.5px;height:159px;background:#9c9c9c;border-radius:4px;"></div>
<svg style="position:absolute;left:708px;top:225px;" width="10" height="7" viewBox="0 0 10 7"><path d="M1 6.5 L4.5 1 L8.5 6.5 Z" fill="#8a8a8a"/></svg>
<svg style="position:absolute;left:708px;top:505px;" width="10" height="7" viewBox="0 0 10 7"><path d="M1 0.5 L4.5 6 L8.5 0.5 Z" fill="#8a8a8a"/></svg>
<div style="position:absolute;left:451px;top:518px;width:265px;height:20px;background:#0e0e0e;border-radius:10px;"></div>
<div style="position:absolute;left:466.5px;top:524.5px;width:206px;height:7.5px;background:#a0a0a0;border-radius:4px;"></div>
<svg style="position:absolute;left:454px;top:523px;" width="10" height="10" viewBox="0 0 10 10"><path d="M8 0.5 L8 9 L1.5 4.8 Z" fill="#8a8a8a"/></svg>
<svg style="position:absolute;left:693px;top:523px;" width="10" height="10" viewBox="0 0 10 10"><path d="M1.5 0.5 L1.5 9 L8 4.8 Z" fill="#8a8a8a"/></svg>
<div style="position:absolute;left:581px;top:262.6px;width:100px;height:255px;border:3px solid #d1262a;box-sizing:border-box;"></div>
<svg style="position:absolute;left:0;top:0" width="720" height="543"><path d="M25 524.8 L20.4 528.6 L25 532.4 M50.8 524.8 L55.4 528.6 L50.8 532.4" fill="none" stroke="#9a9a9a" stroke-width="1.1"/><path d="M200 523 V533.6 M194.7 528.3 H205.3" fill="none" stroke="#d8d8d8" stroke-width="1.2"/><circle cx="436.2" cy="523.4" r="0.95" fill="#cfcfcf"/><circle cx="436.2" cy="527.8" r="0.95" fill="#cfcfcf"/><circle cx="436.2" cy="532.2" r="0.95" fill="#cfcfcf"/></svg>
</body></html>
